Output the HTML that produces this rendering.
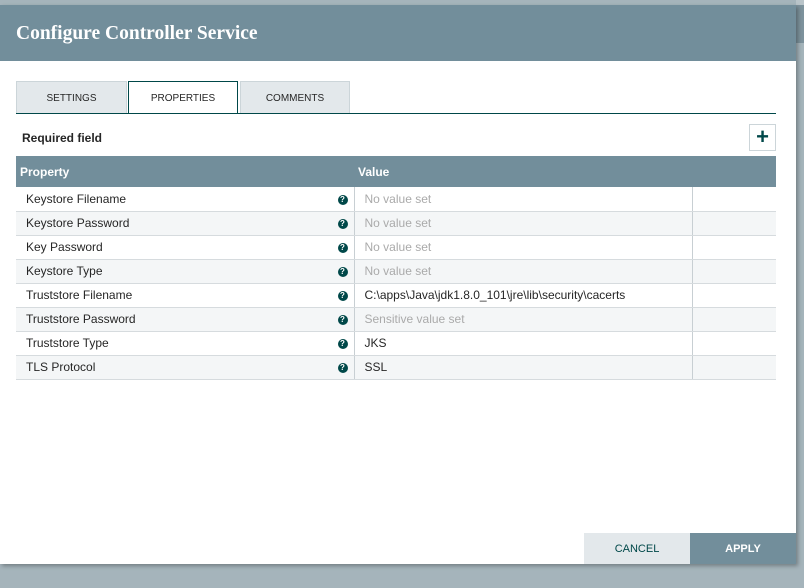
<!DOCTYPE html>
<html><head><style>
*{margin:0;padding:0;box-sizing:border-box}
body{width:804px;height:588px;background:#a5b4bb;font-family:"Liberation Sans",sans-serif;position:relative;overflow:hidden}
.side{position:absolute;left:796px;width:8px}
.dlg{position:absolute;left:0;top:5px;width:796px;height:559px;background:#fff;box-shadow:2px 2px 4px rgba(0,0,0,.3)}
.hdr{height:56px;background:#728e9b;color:#fff;font-family:"Liberation Serif",serif;font-weight:bold;font-size:19.5px;padding:18px 0 0 16px}
.tab{position:absolute;top:76px;height:33px;background:#e3e8eb;border:1px solid #ccd5d9;border-bottom:none;font-size:10px;color:#262626;text-align:center;line-height:33px}
.tab.a{background:#fff;border:1px solid #004849;border-bottom:none;height:33px}
.ul{position:absolute;left:16px;top:108px;width:760px;height:1px;background:#004849}
.req{position:absolute;left:22px;top:126px;font-size:12px;font-weight:bold;color:#262626}
.plus{position:absolute;left:749px;top:119px;width:27px;height:27px;border:1px solid #ccd5d9;color:#004849;font-size:22px;font-weight:bold;text-align:center;line-height:24px}
table{position:absolute;left:16px;top:151px;width:760px;border-collapse:collapse;font-size:12px;color:#262626}
th{background:#728e9b;color:#fff;text-align:left;height:31px;font-size:12px;padding-left:4px}
td{height:24px;border-bottom:1px solid #d6dbde;padding-left:10px}
tr:nth-child(odd) td{background:#f4f6f7}
td.v{border-left:1px solid #c8cfd3;padding-left:10px}
td.x{border-left:1px solid #c8cfd3}
.g{color:#aaa}
.q{float:right;margin-right:6px;width:10px;height:10px;border-radius:50%;background:#004849;color:#fff;font-size:8px;font-weight:bold;line-height:10px;text-align:center;margin-top:3px}
.btn{position:absolute;top:528px;height:31px;width:106px;text-align:center;line-height:33px;font-size:11px}
</style></head><body>
<div class="side" style="top:0;height:5px;background:#b9c4c9"></div>
<div class="side" style="top:5px;height:38px;background:#7d929c"></div>
<div class="dlg">
<div class="hdr">Configure Controller Service</div>
<div class="tab" style="left:16px;width:111px">SETTINGS</div>
<div class="tab a" style="left:128px;width:110px">PROPERTIES</div>
<div class="tab" style="left:240px;width:110px">COMMENTS</div>
<div class="ul"></div>
<div class="req">Required field</div>
<div class="plus">+</div>
<table>
<tr><th style="width:338px">Property</th><th style="width:338px">Value</th><th></th></tr>
<tr><td>Keystore Filename<span class="q">?</span></td><td class="v g">No value set</td><td class="x"></td></tr>
<tr><td>Keystore Password<span class="q">?</span></td><td class="v g">No value set</td><td class="x"></td></tr>
<tr><td>Key Password<span class="q">?</span></td><td class="v g">No value set</td><td class="x"></td></tr>
<tr><td>Keystore Type<span class="q">?</span></td><td class="v g">No value set</td><td class="x"></td></tr>
<tr><td>Truststore Filename<span class="q">?</span></td><td class="v">C:\apps\Java\jdk1.8.0_101\jre\lib\security\cacerts</td><td class="x"></td></tr>
<tr><td>Truststore Password<span class="q">?</span></td><td class="v g">Sensitive value set</td><td class="x"></td></tr>
<tr><td>Truststore Type<span class="q">?</span></td><td class="v">JKS</td><td class="x"></td></tr>
<tr><td>TLS Protocol<span class="q">?</span></td><td class="v">SSL</td><td class="x"></td></tr>
</table>
<div class="btn" style="left:584px;background:#e3e8eb;color:#004849">CANCEL</div>
<div class="btn" style="left:690px;background:#728e9b;color:#fff;font-weight:bold">APPLY</div>
</div>
</body></html>
